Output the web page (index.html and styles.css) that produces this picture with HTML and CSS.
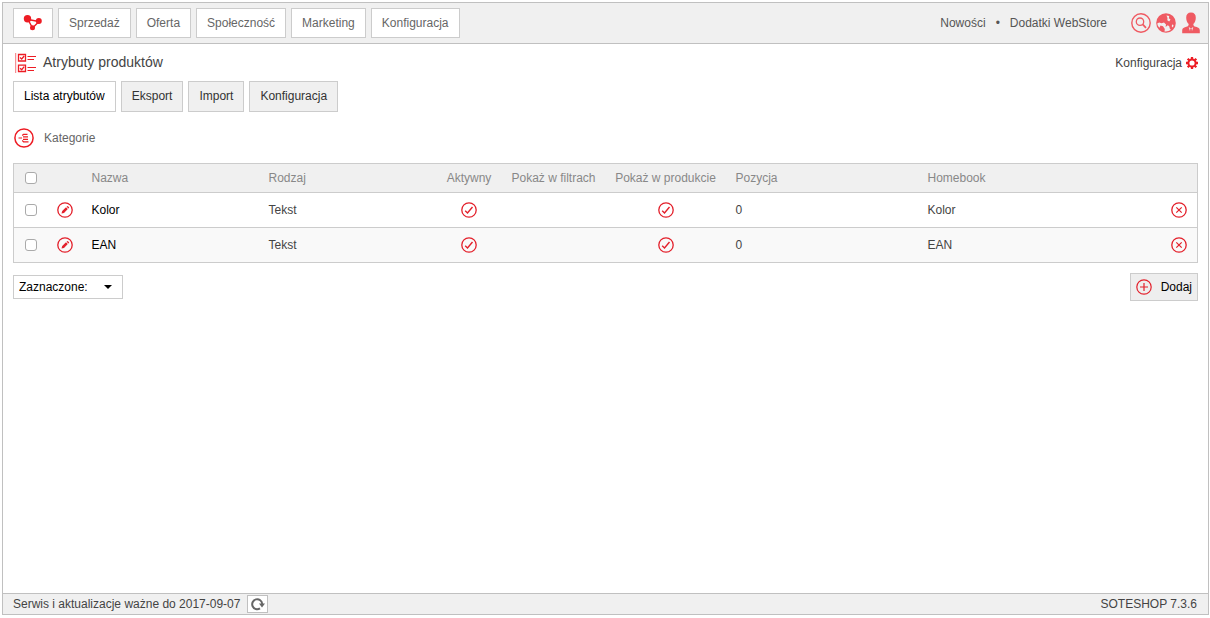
FILE: index.html
```html
<!DOCTYPE html>
<html lang="pl">
<head>
<meta charset="utf-8">
<title>Atrybuty produktów</title>
<link rel="stylesheet" href="styles.css">
</head>
<body>
<svg class="sprite" aria-hidden="true">
  <symbol id="edit" viewBox="0 0 16 16">
    <circle cx="8" cy="8" r="7.2" fill="none" stroke="currentColor" stroke-width="1.3"/>
    <path d="M4.5 11.6l.7-2.5 3.8-3.8 1.8 1.8-3.8 3.800zM9.600 4.800l.6-.6q.4-.3.8 0l1 1q.3.4 0 .8l-.6.6z" fill="currentColor"/>
  </symbol>
  <symbol id="check" viewBox="0 0 16 16">
    <circle cx="8" cy="8" r="7.2" fill="none" stroke="currentColor" stroke-width="1.3"/>
    <path d="M4.200 8.800l2.300 2.100 5-5.900" fill="none" stroke="currentColor" stroke-width="1.400"/>
  </symbol>
  <symbol id="remove" viewBox="0 0 16 16">
    <circle cx="8" cy="8" r="7.2" fill="none" stroke="currentColor" stroke-width="1.3"/>
    <path d="M5.300 5.300l5.400 5.400M10.700 5.300l-5.400 5.400" fill="none" stroke="currentColor" stroke-width="1.200"/>
  </symbol>
</svg>
<div class="frame">
  <header class="topbar">
    <nav class="menu">
      <a class="menu-item menu-logo" href="#" aria-label="Start">
        <svg width="20" height="16" viewBox="0 0 20 16"><path d="M5 4.500l11 2-6.500 6.500z" fill="none" stroke="#ed1c24" stroke-width="1.400"/><circle cx="4.500" cy="3.800" r="3.700" fill="#ed1c24"/><circle cx="15.800" cy="6" r="3" fill="#ed1c24"/><circle cx="9.500" cy="12.800" r="2.500" fill="#ed1c24"/></svg>
      </a>
      <a class="menu-item" href="#">Sprzedaż</a>
      <a class="menu-item" href="#">Oferta</a>
      <a class="menu-item" href="#">Społeczność</a>
      <a class="menu-item" href="#">Marketing</a>
      <a class="menu-item" href="#">Konfiguracja</a>
    </nav>
    <div class="tools">
      <a href="#">Nowości</a>
      <span class="dot">•</span>
      <a href="#">Dodatki WebStore</a>
      <div class="tool-icons">
        <button type="button" class="plain" aria-label="Szukaj"><svg width="20" height="20" viewBox="0 0 20 20" fill="none" stroke="currentColor"><circle cx="10" cy="10" r="9.200" stroke-width="1.400"/><circle cx="9" cy="8.700" r="3.700" stroke-width="1.300"/><path d="M11.700 11.400l3.300 3.400" stroke-width="1.800"/></svg></button>
        <button type="button" class="plain" aria-label="Język"><svg width="20" height="20" viewBox="0 0 20 20"><circle cx="10" cy="10" r="9.800" fill="currentColor"/><path d="M1.200 10.500L3.200 9.500 5.500 10.200 8 9.600 10 11.500 9.600 14 11.800 12.200 13.200 13.200 14 16.200 15.200 16.800Q12 19 8.500 18.500L8.800 16 7 13.200 4.500 12.500 3.500 14.800Q1.500 13 1.200 10.500zM10.500 2.500L13.200 3 12.800 5.200 14.500 6.500 13.200 8.500 11.300 7.300 11.500 5zM16 11.500l1.500.5-.5 2.500-1.200-1z" fill="#f0f0f0"/></svg></button>
        <button type="button" class="plain" aria-label="Konto"><svg width="20" height="22" viewBox="0 0 20 22"><path d="M10 .5c3.200 0 4.900 2 4.800 5.200 0 2.800-1.100 5-2.500 6.300.2 2 .8 2.300 2.400 2.800 3.200 1 4 1.600 4.100 3.600v2.800H1.200v-2.800c.1-2 .9-2.600 4.100-3.600 1.600-.5 2.200-.8 2.400-2.800C6.300 10.700 5.200 8.500 5.200 5.700 5.100 2.500 6.800.5 10 .5z" fill="currentColor"/><path d="M7.700 15l2.300 1.500 2.300-1.500-1.500 4.800h-1.600z" fill="#f0f0f0"/><path d="M9.300 16.500h1.400l.3 3-1 1.200-1-1.200z" fill="currentColor"/></svg></button>
      </div>
    </div>
  </header>

  <main class="content">
    <div class="heading">
      <h1 class="title">
        <svg width="22" height="20" viewBox="0 0 22 20" fill="none" stroke="#ed1c24"><path d="M.7 0v20" stroke="#f4777c"/><path d="M3.500 1.500h7v6.500h-7zM3.500 12.200h7v6.300h-7z" stroke-width="1.300"/><path d="M5 4.500l1.700 1.500 2.500-3M5 15.200l1.700 1.500 2.500-3" stroke-width="1.300"/><path d="M12.500 3.500H21M12.500 14.500H21" stroke-width="1.200"/><path d="M12.500 6.500H19M12.500 17.500H19" stroke-width="1.200"/></svg>
        <span>Atrybuty produktów</span>
      </h1>
      <a class="config" href="#">Konfiguracja
        <svg width="12" height="12" viewBox="0 0 12 12" fill="none" stroke="#ed1c24"><circle cx="6" cy="6" r="3.600" stroke-width="2"/><path d="M6 0v2M6 10v2M0 6h2M10 6h2M1.700 1.700l1.500 1.500M8.800 8.800l1.500 1.500M1.700 10.300l1.500-1.500M8.800 3.200l1.500-1.500" stroke-width="2.300"/></svg>
      </a>
    </div>
    <nav class="tabs">
      <a class="tab tab-active" href="#">Lista atrybutów</a>
      <a class="tab" href="#">Eksport</a>
      <a class="tab" href="#">Import</a>
      <a class="tab" href="#">Konfiguracja</a>
    </nav>
    <a class="category" href="#">
      <svg width="20" height="20" viewBox="0 0 20 20" fill="none" stroke="#ed1c24"><circle cx="10" cy="10" r="9.100" stroke-width="1.500"/><path d="M4.500 10h3.500M10 6.300q-1.500 0-1.500 1.500M8.500 9h.01M10 13.800q-1.500 0-1.500-1.500" stroke-width="1.200"/><path d="M9.500 6.300h4M9 8.800h5M9 11.300h5M9.500 13.800h5" stroke-width="1.200"/></svg>
      Kategorie
    </a>

    <table class="grid">
      <colgroup>
        <col class="w-check"><col class="w-edit"><col class="w-name"><col class="w-kind"><col class="w-active"><col class="w-filter"><col class="w-product"><col class="w-position"><col><col class="w-remove">
      </colgroup>
      <thead>
        <tr>
          <th class="mid"><input type="checkbox" aria-label="Zaznacz wszystkie"></th>
          <th></th>
          <th>Nazwa</th>
          <th>Rodzaj</th>
          <th class="mid">Aktywny</th>
          <th class="mid">Pokaż w filtrach</th>
          <th class="mid">Pokaż w produkcie</th>
          <th>Pozycja</th>
          <th>Homebook</th>
          <th></th>
        </tr>
      </thead>
      <tbody>
        <tr>
          <td class="mid"><input type="checkbox" aria-label="Zaznacz Kolor"></td>
          <td class="mid"><button type="button" class="plain" aria-label="Edytuj"><svg class="icon"><use href="#edit"/></svg></button></td>
          <td><a class="name" href="#">Kolor</a></td>
          <td>Tekst</td>
          <td class="mid"><svg class="icon"><use href="#check"/></svg></td>
          <td></td>
          <td class="mid"><svg class="icon"><use href="#check"/></svg></td>
          <td>0</td>
          <td>Kolor</td>
          <td class="mid"><button type="button" class="plain" aria-label="Usuń"><svg class="icon"><use href="#remove"/></svg></button></td>
        </tr>
        <tr>
          <td class="mid"><input type="checkbox" aria-label="Zaznacz EAN"></td>
          <td class="mid"><button type="button" class="plain" aria-label="Edytuj"><svg class="icon"><use href="#edit"/></svg></button></td>
          <td><a class="name" href="#">EAN</a></td>
          <td>Tekst</td>
          <td class="mid"><svg class="icon"><use href="#check"/></svg></td>
          <td></td>
          <td class="mid"><svg class="icon"><use href="#check"/></svg></td>
          <td>0</td>
          <td>EAN</td>
          <td class="mid"><button type="button" class="plain" aria-label="Usuń"><svg class="icon"><use href="#remove"/></svg></button></td>
        </tr>
      </tbody>
    </table>

    <div class="actions">
      <div class="picker">
        <select aria-label="Zaznaczone"><option>Zaznaczone:</option></select>
        <span class="caret"></span>
      </div>
      <button type="button" class="add">
        <svg class="icon" viewBox="0 0 16 16" fill="none" stroke="currentColor" stroke-width="1.200"><circle cx="8" cy="8" r="7.200"/><path d="M8 4v8M4 8h8"/></svg>
        Dodaj
      </button>
    </div>
  </main>

  <footer class="footer">
    <div class="service">
      Serwis i aktualizacje ważne do 2017-09-07
      <button type="button" class="refresh" aria-label="Odśwież"><svg width="14" height="14" viewBox="0 0 14 14"><path d="M9 11.400A5 5 0 1 1 11.200 7" fill="none" stroke="#666" stroke-width="2"/><path d="M8 6.600h6l-3 3.800z" fill="#666"/></svg></button>
    </div>
    <span>SOTESHOP 7.3.6</span>
  </footer>
</div>
</body>
</html>
```
FILE: styles.css
```css
* { box-sizing: border-box; }

body {
  display: flex;
  min-height: 100vh;
  margin: 0;
  padding: 2px 1px 3px 2px;
  background: #fff;
  color: #444;
  font: 12px/16px "Liberation Sans", Arial, sans-serif;
}

a { color: inherit; text-decoration: none; }
svg { display: block; flex: none; }
button, select { font: inherit; cursor: pointer; }
.sprite { position: absolute; width: 0; height: 0; }

.plain {
  display: block;
  padding: 0;
  border: 0;
  background: none;
  color: inherit;
}

.frame {
  flex: 1;
  display: flex;
  flex-direction: column;
  border: 1px solid #c0c0c0;
}

.topbar {
  display: flex;
  justify-content: space-between;
  align-items: center;
  padding: 5px 7px 5px 10px;
  border-bottom: 1px solid #c0c0c0;
  background: #f0f0f0;
}

.menu, .tabs { display: flex; gap: 5px; }

.menu-item {
  display: flex;
  align-items: center;
  height: 30px;
  padding: 0 10px;
  border: 1px solid #ccc;
  background: #fff;
  color: #666;
}

.menu-logo { padding: 0 9px; }

.tools { display: flex; align-items: center; gap: 10px; color: #555; }
.tool-icons {
  display: flex;
  align-items: center;
  gap: 5px;
  margin-left: 14px;
  color: #ef5a62;
}

.content { flex: 1; padding: 9px 10px; }

.heading {
  display: flex;
  justify-content: space-between;
  align-items: center;
}

.title {
  display: flex;
  align-items: center;
  gap: 6px;
  margin: 0;
  padding-left: 2px;
  font-size: 14px;
  font-weight: normal;
  line-height: 18px;
}

.title span { padding-bottom: 2px; }

.config { display: flex; align-items: center; gap: 4px; }

.tabs { margin-top: 8px; }

.tab {
  height: 31px;
  padding: 6px 10px;
  border: 1px solid #ccc;
  background: #f0f0f0;
  color: #333;
}

.tab-active { background: #fff; color: #000; }

.category {
  display: flex;
  align-items: center;
  gap: 10px;
  width: fit-content;
  margin-top: 16px;
  padding-left: 1px;
  color: #666;
}

.grid {
  width: 100%;
  margin-top: 15px;
  border: 1px solid #ccc;
  border-collapse: collapse;
  table-layout: fixed;
}

.grid th, .grid td {
  height: 35px;
  padding: 0 10px;
  border-bottom: 1px solid #ccc;
  text-align: left;
}

.grid th {
  height: 29px;
  padding: 0 10px;
  background: #f0f0f0;
  color: #888;
  font-weight: normal;
}

.grid .mid { padding: 0; text-align: center; }
.grid .mid > * { margin: 0 auto; }
.grid tbody tr:nth-child(even) { background: #f9f9f9; }

.w-check { width: 35px; }
.w-edit { width: 33px; }
.w-name { width: 177px; }
.w-kind { width: 178px; }
.w-active { width: 65px; }
.w-filter { width: 104px; }
.w-product { width: 120px; }
.w-position { width: 192px; }
.w-remove { width: 36px; }

.grid input {
  display: block;
  width: 12px;
  height: 12px;
  appearance: none;
  border: 1px solid #aaa;
  border-radius: 3px;
  background: #fff;
}

.grid input:checked { background: #e3202b; }

.name { color: #000; }
.icon { width: 16px; height: 16px; color: #e3202b; }

.actions {
  display: flex;
  justify-content: space-between;
  align-items: center;
  margin-top: 10px;
}

.picker { position: relative; }

.picker select {
  display: block;
  width: 110px;
  height: 24px;
  padding: 0 5px;
  appearance: none;
  border: 1px solid #ccc;
  border-radius: 0;
  background: #fff;
  color: #000;
}

.caret {
  position: absolute;
  top: 10px;
  right: 11px;
  border: 4px solid transparent;
  border-top-color: #000;
  border-bottom: 0;
  pointer-events: none;
}

.add {
  display: flex;
  align-items: center;
  gap: 9px;
  height: 28px;
  padding: 0 5px;
  border: 1px solid #ccc;
  background: #eee;
  color: #000;
}

.footer {
  display: flex;
  justify-content: space-between;
  align-items: center;
  height: 21px;
  padding: 0 11px 0 10px;
  border-top: 1px solid #c0c0c0;
  background: #f0f0f0;
}

.service { display: flex; align-items: center; gap: 7px; }

.refresh {
  display: flex;
  align-items: center;
  justify-content: center;
  width: 21px;
  height: 18px;
  padding: 0;
  border: 1px solid #c0c0c0;
  background: #fff;
}
```
